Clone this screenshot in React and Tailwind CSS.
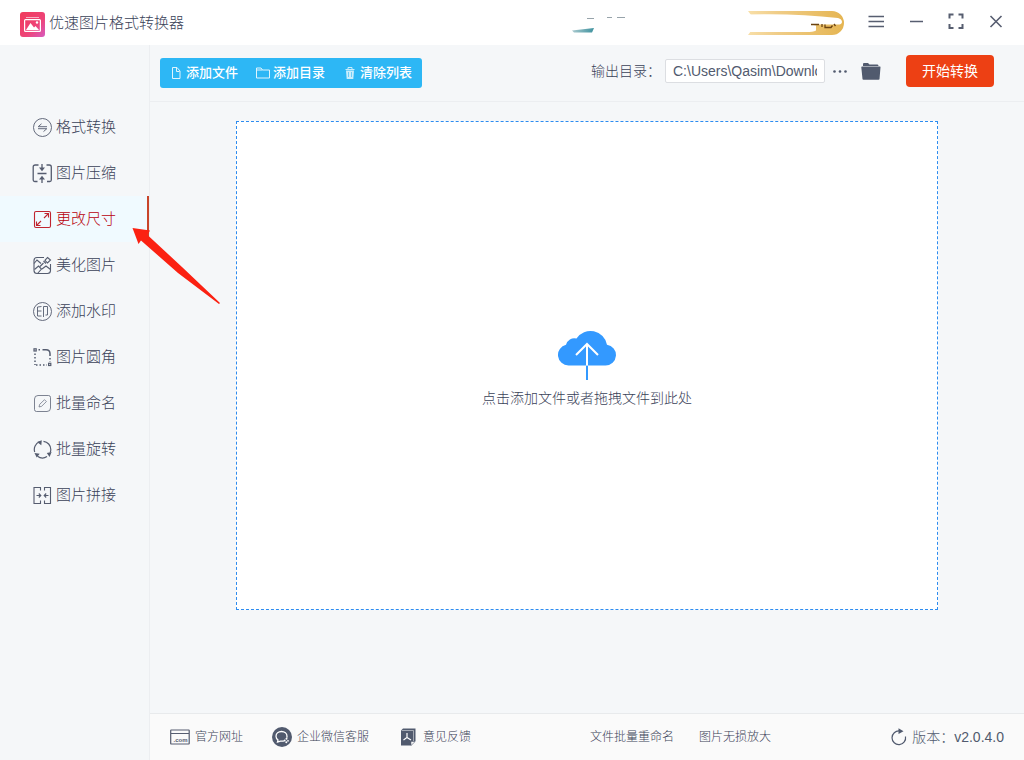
import { useState } from "react"

const Stroke = ({ children, size = 20, width = 1 }) => (
  <svg
    width={size}
    height={size}
    viewBox="0 0 20 20"
    fill="none"
    stroke="currentColor"
    strokeWidth={width}
    className="shrink-0 opacity-85"
    aria-hidden="true"
  >
    {children}
  </svg>
)

const ConvertIcon = () => (
  <Stroke width={0.9}>
    <circle cx="10.5" cy="10.5" r="9" />
    <path d="M15 9.700H6.200L9.500 6.800M6 11.700h8.800L11.500 14.600" />
  </Stroke>
)

const CompressIcon = () => (
  <Stroke width={1.3}>
    <path d="M6.500 2H3.200Q1.200 2 1.200 4v13q0 1.500 1.500 1.500H5.500M14.500 2h2.800q2 0 2 2v13q0 1.500-1.500 1.500H15" />
    <path d="M5.500 10.500h9M10 1v5M10 20v-5" />
    <path d="M7 4.500h6L10 8.200zM7 16.500h6L10 12.800z" fill="currentColor" stroke="none" />
  </Stroke>
)

const ResizeIcon = () => (
  <Stroke width={1.1}>
    <rect x="2.500" y="2.500" width="16" height="16" rx="1.500" />
    <path d="M12 9l4.500-4.500M12.500 4.500h4V8.500M9 12l-4.500 4.500M4.500 12.500v4h4" />
  </Stroke>
)

const BeautifyIcon = () => (
  <Stroke width={1.1}>
    <path d="M12 2.500H5Q2 2.500 2 5.500v10q0 3 3 3h10.500q3 0 3-3V9" />
    <path d="M2 8.500l3-3.500 4 3.500M2.500 14.500l4-3.500 3 3-4 4.500M10 14l4-3 4.500 3.500M8 11.500l3.500-3.500" />
    <path d="M15.500 2.500l3 2.500-3 3-2.500-2.700zM11.500 6l2.500 2.500" />
  </Stroke>
)

const WatermarkIcon = () => (
  <Stroke width={0.9}>
    <circle cx="10.500" cy="10.500" r="9" />
    <path d="M9.500 5.500L5.500 6v9h4M5.500 10h4M11.500 16V5.500h4v8.500h-2" />
  </Stroke>
)

const CornerIcon = () => (
  <Stroke width={1.5}>
    <path d="M10.500 2.800H14q4 0 4 4V9" />
    <path d="M6.500 2.800h1.500M3 6.500V18M4 18h11M18 11v4" strokeDasharray="1.500 2" />
    <rect x="2" y="1.800" width="2.200" height="2.200" strokeWidth="1.200" />
    <rect x="16.600" y="16.300" width="2.200" height="2.200" strokeWidth="1.200" />
  </Stroke>
)

const RenameIcon = () => (
  <Stroke>
    <path d="M6 2.500h10.500q2 0 2 2V15q0 3.500-3.500 3.500H4.500q-2 0-2-2V6Q2.500 2.500 6 2.500z" opacity="0.750" />
    <path d="M7 14l.7-2.700 4.800-4.600 1.900 1.900-4.800 4.700z" strokeWidth="0.900" opacity="0.700" />
  </Stroke>
)

const RotateIcon = () => (
  <Stroke width={1.2}>
    <path d="M11.500 2.300a8.300 8.300 0 0 1 7.300 8.200q0 1.700-.6 3M15 17.600a8.300 8.300 0 0 1-9.500-.4M2.700 13A8.300 8.300 0 0 1 7.500 2.800" />
    <path d="M9.800 1.200l-.5 5-4.200-3.200zM19.600 13l-2 5-2.800-4zM2.500 14l5.200.8-3 3.800z" fill="currentColor" stroke="none" />
  </Stroke>
)

const JoinIcon = () => (
  <Stroke width={1.1}>
    <path d="M8.500 5.500V2.500H2v16h6.500V15.500M12.500 5.500V2.500h6v16h-6V15.500" />
    <path d="M4.500 10.500h3.800M6.800 8.500l2 2-2 2M16.500 10.500h-3.800M14.200 8.500l-2 2 2 2" />
  </Stroke>
)

const menu = [
  { name: "格式转换", icon: ConvertIcon },
  { name: "图片压缩", icon: CompressIcon },
  { name: "更改尺寸", icon: ResizeIcon },
  { name: "美化图片", icon: BeautifyIcon },
  { name: "添加水印", icon: WatermarkIcon },
  { name: "图片圆角", icon: CornerIcon },
  { name: "批量命名", icon: RenameIcon },
  { name: "批量旋转", icon: RotateIcon },
  { name: "图片拼接", icon: JoinIcon },
]

const Logo = () => (
  <svg width="25" height="25" viewBox="0 0 25 25" aria-hidden="true">
    <defs>
      <linearGradient id="logo" x1="0" y1="0" x2="1" y2="1">
        <stop offset="0" stopColor="#f03a5a" />
        <stop offset="0.6" stopColor="#ee4478" />
        <stop offset="1" stopColor="#d65cc0" />
      </linearGradient>
    </defs>
    <rect width="25" height="25" rx="3" fill="url(#logo)" />
    <path d="M6 5.500h13" stroke="#fff" opacity="0.600" />
    <rect x="4.600" y="7.600" width="15.800" height="11.800" rx="1" fill="none" stroke="#fff" strokeWidth="1.200" />
    <path d="M6 18l4.500-7 3.500 4.500 1.500-1.500 3.500 4z" fill="#fff" />
    <circle cx="17" cy="10.500" r="1.200" fill="#fff" />
  </svg>
)

// Member badge, mostly faded out
const MemberBadge = () => (
  <svg width="280" height="45" viewBox="0 0 280 45" className="mr-2 shrink-0" aria-hidden="true">
    <defs>
      <linearGradient id="gold" x1="0" x2="1">
        <stop offset="0" stopColor="#f8dfa8" />
        <stop offset="0.3" stopColor="#f0cd88" />
        <stop offset="1" stopColor="#e5b552" />
      </linearGradient>
      <linearGradient id="teal" x1="0" x2="1">
        <stop offset="0" stopColor="#a9c9ce" />
        <stop offset="1" stopColor="#3f929f" />
      </linearGradient>
    </defs>
    <path d="M4 30.500L26 28 24 32.500H6z" fill="url(#teal)" />
    <path d="M19 18.500h7M39 17.500h5M49 17.500h8" stroke="#8b98a0" strokeWidth="0.900" />
    <path d="M180 11h84a12 12 0 0 1 0 24h-84l3-4V15z" fill="url(#gold)" />
    <path d="M178 14.500q50-1.500 92 3.500 4 1 4 4t-6 2.500l-25 0 5 1v5q-3 1.500-10 1.500h-60z" fill="#fff" />
    <path d="M243 24.500h8M254 24v3M257 24.500v3h6l1.500-2M266 24l1.500 2" fill="none" stroke="#6b4312" strokeWidth="1.300" />
  </svg>
)

const Pointer = () => (
  <svg
    width="88"
    height="76"
    viewBox="0 0 88 76"
    className="absolute left-[132px] top-8 z-10 pointer-events-none"
    aria-hidden="true"
  >
    <path d="M0.500 0L18 2.500 15.500 7 50 39 88 75 87 76 46 45 9 12.500 6.500 16z" fill="#fb2112" />
  </svg>
)

const Header = () => (
  <header className="flex h-[45px] shrink-0 items-center bg-white pl-5 pr-2">
    <div className="flex items-center gap-1 pt-[3px]">
      <Logo />
      <h1 className="pb-[3px] text-[15px] leading-5">优速图片格式转换器</h1>
    </div>
    <div className="grow" />
    <MemberBadge />
    <div className="flex pb-[3px]">
      <button type="button" aria-label="菜单" className="flex h-9 w-10 items-center justify-center">
        <Stroke width={1.700}><path d="M2.500 5.500h15.500M2.500 10.500h15.500M2.500 15.500h15.500" /></Stroke>
      </button>
      <button type="button" aria-label="最小化" className="flex h-9 w-10 items-center justify-center">
        <Stroke width={1.500}><path d="M4 10.500h13" /></Stroke>
      </button>
      <button type="button" aria-label="最大化" className="flex h-9 w-10 items-center justify-center">
        <Stroke width={2}><path d="M7.500 3.500H3.500v4M12.500 3.500h4v4M7.500 17H3.500v-4M12.500 17h4v-4" /></Stroke>
      </button>
      <button type="button" aria-label="关闭" className="flex h-9 w-10 items-center justify-center">
        <Stroke width={1.600}><path d="M4.500 5l11 11M15.500 5l-11 11" /></Stroke>
      </button>
    </div>
  </header>
)

const Sidebar = ({ active, onSelect }) => (
  <nav className="w-[150px] shrink-0 border-r border-[#eceef1] pt-[59px]">
    <ul>
      {menu.map(({ name, icon: Icon }) => (
        <li key={name} className="relative">
          <button
            type="button"
            onClick={() => onSelect(name)}
            className={`flex h-[46px] w-full items-center gap-1 pl-8 text-[15px] ${active === name ? "border-r-2 border-[#c8452b] bg-[#f0faff] text-[#b8000c]" : ""}`}
          >
            <Icon />
            {name}
          </button>
          {name === "更改尺寸" && <Pointer />}
        </li>
      ))}
    </ul>
  </nav>
)

const Toolbar = () => {
  const [path, setPath] = useState("C:\\Users\\Qasim\\Downloads")

  return (
    <div className="flex h-[57px] shrink-0 items-center justify-between border-b border-[#eceef1] pl-[10px] pr-[30px]">
      <div className="flex h-[30px] items-center gap-[18px] rounded-[3px] bg-[#2db7f5] pl-[9px] pr-[10px] text-[13px] font-medium text-white">
        <button type="button" className="flex items-center gap-[3px]">
          <svg width="14" height="14" viewBox="0 0 14 14" fill="none" stroke="currentColor" opacity="0.850" aria-hidden="true">
            <path d="M3.500 1.500h4.500l3 3.500v7.500H3.500zM7.500 2v3.500h3" />
          </svg>
          添加文件
        </button>
        <button type="button" className="flex items-center gap-[3px]">
          <svg width="14" height="14" viewBox="0 0 14 14" fill="none" stroke="currentColor" opacity="0.850" aria-hidden="true">
            <path d="M.5 12V2h4.500l1.500 2h7v8zM.5 4h6" />
          </svg>
          添加目录
        </button>
        <button type="button" className="flex items-center gap-[3px]">
          <svg width="14" height="14" viewBox="0 0 14 14" fill="none" stroke="currentColor" opacity="0.750" aria-hidden="true">
            <path d="M2.500 3.500h9M5 3V1.500h4V3" />
            <path d="M3 4.500h8l-.7 8.500H3.700z" fill="currentColor" stroke="none" />
            <path d="M5.500 6v5M8.500 6v5" stroke="#2db7f5" strokeWidth="0.600" />
          </svg>
          清除列表
        </button>
      </div>
      <div className="flex items-center pb-1 text-sm">
        <label htmlFor="output" className="mr-1">输出目录：</label>
        <input
          id="output"
          type="text"
          value={path}
          onChange={(e) => setPath(e.target.value)}
          className="h-6 w-[160px] rounded-[2px] border border-[#dcdee2] bg-white px-[7px] text-sm text-[#515a6e]"
        />
        <button type="button" aria-label="选择目录" className="ml-[7px] text-[#515a6e]">
          <svg width="16" height="20" viewBox="0 0 16 20" fill="currentColor" aria-hidden="true">
            <circle cx="2.500" cy="10.500" r="1.300" />
            <circle cx="8" cy="10.500" r="1.300" />
            <circle cx="13.500" cy="10.500" r="1.300" />
          </svg>
        </button>
        <button type="button" aria-label="打开目录" className="ml-3 text-[#515a6e]">
          <svg width="22" height="20" viewBox="0 0 22 20" fill="currentColor" aria-hidden="true">
            <path d="M3 5V3q0-1 1-1h4l1.500 1.500h8q1 0 1 1.500z" />
            <path d="M2 5.500h18q.6 0 .5.700L19.500 18q0 .8-1 .8h-15q-1 0-1-.8L1.300 6.300Q1.300 5.500 2 5.500z" />
          </svg>
        </button>
        <button type="button" className="ml-6 h-8 w-[88px] rounded bg-[#ed4014] text-sm font-normal text-white">
          开始转换
        </button>
      </div>
    </div>
  )
}

const DropZone = () => (
  <button
    type="button"
    className="mx-[86px] mb-[103px] mt-[19px] flex grow flex-col items-center justify-center gap-[7px] border border-dashed border-[#2d8cf0] bg-white pt-[7px] text-sm"
  >
    <svg width="58" height="50" viewBox="0 0 58 50" aria-hidden="true">
      <path
        d="M10.500 35.500A10.500 10.500 0 0 1 8 14.800 8.500 8.500 0 0 1 18.500 8.500 16.800 16.800 0 0 1 49 14.800a10.400 10.400 0 0 1-1.500 20.700z"
        fill="#3399ff"
      />
      <path d="M29 35.500V50" stroke="#3399ff" strokeWidth="2" />
      <path d="M29 35.500V14M18 25l11-11 11 11" fill="none" stroke="#fff" strokeWidth="2" />
    </svg>
    <span className="leading-[22px]">点击添加文件或者拖拽文件到此处</span>
  </button>
)

const Footer = () => (
  <footer className="flex h-[47px] shrink-0 items-center justify-between border-t border-[#e8eaec] bg-[#fafafa] px-5 text-xs">
    <div className="flex items-center gap-[29px]">
      <a href="#site" className="flex items-center gap-[5px]">
        <svg width="20" height="20" viewBox="0 0 20 20" fill="none" stroke="currentColor" opacity="0.850" aria-hidden="true">
          <rect x="0.700" y="3" width="18.500" height="14" rx="0.500" strokeWidth="1.200" />
          <path d="M1 6.500h18" />
          <text x="3.500" y="15" fontSize="6" fontWeight="bold" fill="currentColor" stroke="none">.com</text>
        </svg>
        官方网址
      </a>
      <a href="#service" className="flex items-center gap-[5px]">
        <svg width="20" height="20" viewBox="0 0 20 20" fill="none" aria-hidden="true">
          <circle cx="10" cy="10" r="10" fill="#515a6e" />
          <path d="M12 13.800q-1.500.6-3.500.3L5.500 15l.5-2Q4 11.500 4 9.300C4 6.500 6.500 4.500 9.500 4.500S15 6.500 15 9.300q0 .8-.3 1.500" stroke="#fff" strokeWidth="1.300" />
          <circle cx="14.500" cy="11.800" r="1" fill="#fff" />
          <circle cx="16" cy="13.800" r="0.900" fill="#fff" />
          <circle cx="12.700" cy="13.500" r="0.900" fill="#fff" />
          <circle cx="14.300" cy="15.300" r="1" fill="#fff" />
        </svg>
        企业微信客服
      </a>
      <a href="#feedback" className="flex items-center gap-[5px]">
        <svg width="20" height="20" viewBox="0 0 20 20" aria-hidden="true">
          <path d="M3 3.500L5 1.500h12.500V14L13 18.500H3z" fill="#515a6e" />
          <path d="M4 3.500h11.500V14" fill="none" stroke="#fafafa" strokeWidth="0.500" />
          <path d="M9 6v4.500l-3.500 2.500M9 10.500l4 2.500" fill="none" stroke="#fff" strokeWidth="1.200" />
          <path d="M13 18.500v-4h4.200z" fill="#fafafa" stroke="#515a6e" strokeWidth="0.500" />
        </svg>
        意见反馈
      </a>
    </div>
    <div className="flex items-center gap-[25px]">
      <a href="#rename">文件批量重命名</a>
      <a href="#enlarge">图片无损放大</a>
    </div>
    <button type="button" className="flex items-center gap-1 text-sm text-[#515a6e]">
      <svg width="18" height="18" viewBox="0 0 18 18" fill="none" stroke="currentColor" aria-hidden="true">
        <path d="M9.500 3A6.800 6.800 0 1 0 15.500 8.500" strokeWidth="1.200" />
        <path d="M8.500 .2l5 3L8.500 6z" fill="currentColor" stroke="none" />
      </svg>
      <span>版本：v2.0.4.0</span>
    </button>
  </footer>
)

export default function App() {
  const [active, setActive] = useState("更改尺寸")

  return (
    <div className="flex min-h-screen flex-col bg-[#f5f7f9] font-['Liberation_Sans','Noto_Sans_CJK_SC',sans-serif] font-light text-[#3a4258]">
      <Header />
      <div className="flex grow">
        <Sidebar active={active} onSelect={setActive} />
        <main className="flex min-w-0 grow flex-col">
          <Toolbar />
          <DropZone />
          <Footer />
        </main>
      </div>
    </div>
  )
}
